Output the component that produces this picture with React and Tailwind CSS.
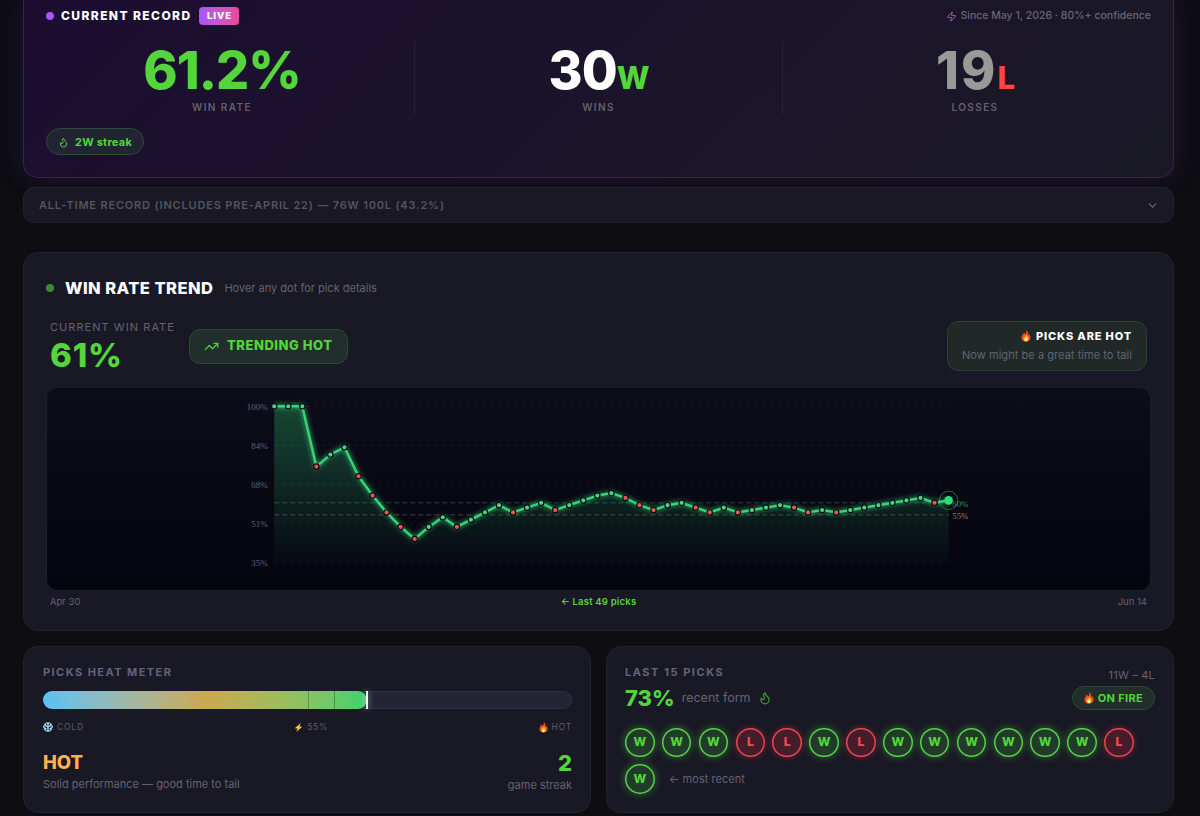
import { ChevronDown, Flame, TrendingUp, Zap } from "lucide-react"

const RESULTS = "WWWLWWLLLLLWWLWWWLWWLWWWWLLLWWLLWLWWWLLWLWWWWWWLW"
const LAST_15 = "WWWLLWLWWWWWWLW"

const CHART = { left: 227.2, right: 901.6, top: 18.3, bottom: 175.1, max: 100, min: 35 }
const GRID = [100, 83.75, 67.5, 51.25, 35]

const yFor = (pct) =>
    CHART.top + ((CHART.max - pct) / (CHART.max - CHART.min)) * (CHART.bottom - CHART.top)

const points = RESULTS.split("").map((result, i) => {
    const wins = RESULTS.slice(0, i + 1).split("W").length - 1
    return {
        result,
        x: CHART.left + (i * (CHART.right - CHART.left)) / (RESULTS.length - 1),
        y: yFor(Math.round((wins / (i + 1)) * 100)),
    }
})

function FireEmoji({ className }) {
    return (
        <svg viewBox="2 0 20 24" className={className}>
            <path
                d="M12.5 0c1 4-1 6-1.200 9-1.300-.8-1.800-2-1.600-3.600C6 8 3 11.500 3 15.500 3 20 6.800 23.500 12 23.500s9-3.500 9-8c0-3-1.200-5.500-2.800-7.300 0 1.600-.5 2.600-1.400 3.200C17 7 15.500 3 12.500 0Z"
                fill="#f4511e"
            />
            <path d="M4.500 4c1 1.500 1.200 2.600.6 4-1-1-1.400-2.400-.6-4Z" fill="#f4511e" />
            <path
                d="M12.500 8.500c.3 2.500 4.500 4.500 4.500 8.500 0 3.500-2.200 5.500-5 5.500s-5-2-5-5c0-2.200 1-3.700 2-4.700 0 1.200.5 2 1.300 2.400.2-2.700.8-4.700 2.200-6.700Z"
                fill="#ffb300"
            />
            <path
                d="M12.300 13.500c.3 1.600 2.700 2.800 2.700 5.200 0 2.200-1.300 3.500-3 3.500s-3-1.200-3-3c0-1.500.7-2.300 1.400-3 .2.700.5 1 .9 1.200 0-1.500.300-2.700 1-3.900Z"
                fill="#fff3c4"
            />
        </svg>
    )
}

function SnowEmoji({ className }) {
    return (
        <svg viewBox="0 0 24 24" className={className}>
            <g stroke="#a5dcf3" strokeWidth="2.800" strokeLinecap="round" fill="none">
                <path d="M12 1.500v21M3 6.800l18 10.400M3 17.200 21 6.800" />
                <path d="m8.500 2 3.500 3 3.500-3M8.500 22l3.500-3 3.500 3M1.500 11l4.500-2-.5-5M22.500 13 18 15l.5 5M5.500 20l.5-5-4.500-2M18.500 4 18 9l4.500 2" />
            </g>
        </svg>
    )
}

function BoltEmoji({ className }) {
    return (
        <svg viewBox="0 0 24 24" className={className}>
            <path d="M18 0 2 14l7.500.8L6 24 22 10l-7.500-.8L18 0Z" fill="#ffc830" />
        </svg>
    )
}

function Stat({ value, suffix, suffixClass, valueClass, label, className }) {
    return (
        <div className={`pt-[3px] text-center ${className}`}>
            <div className={`h-[52px] text-[52px] leading-[53px] font-extrabold ${valueClass}`}>
                {value}
                {suffix && (
                    <span className={`text-[31px] leading-none tracking-[-1px] ${suffixClass}`}>{suffix}</span>
                )}
            </div>
            <div className="mt-[3px] text-[10px] leading-4 font-semibold tracking-[1.400px] text-[#65616c]">
                {label}
            </div>
        </div>
    )
}

function CurrentRecord() {
    return (
        <section className="h-[178px] rounded-b-[15px] border border-t-0 border-[#3a2058] bg-linear-135 from-[#1c0d31] to-[#1a1925] px-[22px] shadow-[0_0_30px_rgba(168,85,247,0.12)]">
            <div className="flex h-8 items-center justify-between">
                <div className="flex items-center">
                    <span className="size-2 rounded-full bg-[#a855f7]" />
                    <h2 className="ml-[7px] text-[12px] font-extrabold tracking-[1.400px] text-white">
                        CURRENT RECORD
                    </h2>
                    <span className="ml-[8px] flex h-[18px] w-10 items-center justify-center rounded bg-linear-to-r from-[#a855f7] to-[#ec4899] text-[9.500px] font-extrabold tracking-[1px] text-white">
                        LIVE
                    </span>
                </div>
                <div className="flex items-center gap-[3px] text-[10.5px] font-medium text-[#6a6671]">
                    <Zap className="size-[11px] text-[#a855f7]" />
                    Since May 1, 2026 · 80%+ confidence
                </div>
            </div>
            <div className="mt-[9px] grid h-[73px] grid-cols-[368px_368px_1fr]">
                <Stat
                    value="61.2%"
                    valueClass="tracking-[-1px] text-[#53d53b]"
                    label="WIN RATE"
                    className="pr-4"
                />
                <Stat
                    value="30"
                    valueClass="tracking-[-1px] text-white"
                    suffix="W"
                    suffixClass="text-[#53d53b]"
                    label="WINS"
                    className="border-l border-white/6 px-4"
                />
                <Stat
                    value="19"
                    valueClass="tracking-[2px] text-[#999999]"
                    suffix="L"
                    suffixClass="text-[#ff4545]"
                    label="LOSSES"
                    className="border-l border-white/6 pl-4"
                />
            </div>
            <div className="mt-[14px] inline-flex h-[27px] items-center gap-[6px] rounded-full border border-[#2c4a36] bg-[#222434] px-[11px] pt-px text-[11px] font-bold tracking-[0.25px] text-[#53d53b]">
                <Flame className="size-[11px]" />
                2W streak
            </div>
        </section>
    )
}

function TrendChart() {
    const line = points.map((p) => `${p.x},${p.y}`).join(" ")
    const last = points[points.length - 1]
    return (
        <svg viewBox="0 0 1103 202" className="block h-[202px] w-full">
            <defs>
                <linearGradient id="area" x1="0" y1="0" x2="0" y2="1">
                    <stop offset="0" stopColor="#2ecc71" stopOpacity="0.3" />
                    <stop offset="1" stopColor="#2ecc71" stopOpacity="0.02" />
                </linearGradient>
                <filter id="glow" x="-5%" y="-20%" width="110%" height="140%">
                    <feGaussianBlur stdDeviation="2.500" />
                </filter>
            </defs>
            {GRID.map((pct) => (
                <g key={pct}>
                    <line
                        x1={CHART.left}
                        x2={CHART.right}
                        y1={yFor(pct)}
                        y2={yFor(pct)}
                        stroke="#ffffff"
                        strokeOpacity="0.08"
                        strokeWidth="0.8"
                        strokeDasharray="4 4"
                    />
                    <text
                        x={CHART.left - 6.5}
                        y={yFor(pct) + 3.3}
                        textAnchor="end"
                        className="fill-[#62626e] font-['Liberation_Serif',serif] text-[9px]"
                    >
                        {Math.round(pct)}%
                    </text>
                </g>
            ))}
            <polygon
                points={`${CHART.left},${CHART.bottom} ${line} ${CHART.right},${CHART.bottom}`}
                fill="url(#area)"
            />
            <line x1={CHART.left} x2={CHART.right} y1={yFor(60)} y2={yFor(60)} stroke="#2ecc71" strokeOpacity="0.35" strokeDasharray="5 3" />
            <line x1={CHART.left} x2={CHART.right} y1={yFor(55)} y2={yFor(55)} stroke="#c9a85a" strokeOpacity="0.35" strokeDasharray="5 3" />
            <text x={last.x + 3.7} y={yFor(60) + 4} className="fill-[#3a8f5f] font-['Liberation_Serif',serif] text-[8.700px]">
                60%
            </text>
            <text x={last.x + 3.7} y={yFor(55) + 4} className="fill-[#a07c48] font-['Liberation_Serif',serif] text-[8.700px]">
                55%
            </text>
            <polyline points={line} fill="none" stroke="#2ecc71" strokeOpacity="0.8" strokeWidth="3.400" filter="url(#glow)" />
            <polyline points={line} fill="none" stroke="#38d479" strokeWidth="2.400" strokeLinejoin="round" />
            {points.slice(0, -1).map((p, i) => (
                <circle
                    key={i}
                    cx={p.x}
                    cy={p.y}
                    r="2.700"
                    fill={p.result === "W" ? "#4cd084" : "#e85555"}
                    stroke="#0a0a14"
                    strokeWidth="1.200"
                />
            ))}
            <circle cx={last.x} cy={last.y} r="9.200" fill="none" stroke="#2ecc71" strokeOpacity="0.5" />
            <circle cx={last.x} cy={last.y} r="4.300" fill="#2edc76" />
        </svg>
    )
}

function WinRateTrend() {
    return (
        <section className="mt-[29px] h-[379px] rounded-[15px] border border-[#23222e] bg-[#191825] px-[22px]">
            <div className="mt-[23px] flex h-6 items-center">
                <span className="size-2 rounded-full bg-[#3a8a33]" />
                <h2 className="ml-[11px] text-[16.5px] font-extrabold tracking-[0.45px] text-white">
                    WIN RATE TREND
                </h2>
                <span className="ml-[11px] text-[11px] text-[#656371]">Hover any dot for pick details</span>
            </div>
            <div className="mt-[21px] flex h-[50px] items-center px-[4px]">
                <div className="pt-[2px]">
                    <div className="text-[11px] leading-3 tracking-[1.050px] text-[#656371]">CURRENT WIN RATE</div>
                    <div className="mt-[4px] text-[33px] leading-[36px] font-extrabold tracking-[0.8px] text-[#53d53b]">
                        61%
                    </div>
                </div>
                <div className="ml-[14px] flex h-[35px] items-center gap-2 rounded-[11px] border border-[#2c4a31] bg-[#222e2b] px-[14px] text-[13px] font-extrabold tracking-[0.55px] text-[#53d53b]">
                    <TrendingUp className="size-[15px]" />
                    TRENDING HOT
                </div>
                <div className="ml-auto h-[50px] rounded-[11px] border border-[#29402f] bg-[#202828] px-[14px] pt-[6px] text-right">
                    <div className="flex items-center justify-end gap-[5px] text-[11px] leading-4 font-extrabold tracking-[0.85px] text-white">
                        <FireEmoji className="h-3 w-[10px]" />
                        PICKS ARE HOT
                    </div>
                    <div className="mt-[3px] text-[11px] leading-4 tracking-[0.05px] text-[#626572]">
                        Now might be a great time to tail
                    </div>
                </div>
            </div>
            <div className="mt-[16px] overflow-hidden rounded-[11px] border border-[#1e1d2a] bg-linear-to-b from-[#0d0d1a] to-[#05050e]">
                <TrendChart />
            </div>
            <div className="mt-[3px] grid grid-cols-3 px-[4px] text-[9.5px] leading-4 text-[#656371]">
                <span>Apr 30</span>
                <span className="text-center font-semibold tracking-[0.2px] text-[#53d53b]">← Last 49 picks</span>
                <span className="text-right">Jun 14</span>
            </div>
        </section>
    )
}

function HeatMeter() {
    return (
        <section className="h-[167px] rounded-[15px] border border-[#23222e] bg-[#191825] pr-[18px] pl-[19px]">
            <h3 className="mt-[17px] text-[11px] leading-4 font-bold tracking-[1.450px] text-[#65637c]">
                PICKS HEAT METER
            </h3>
            <div className="relative mt-[11px] h-[18px] rounded-full bg-[#252434] shadow-[inset_0_0_0_1px_#2f2e40]">
                <div className="h-full w-[61.2%] rounded-full bg-linear-to-r from-[#56c1f5] via-[#cda84e] to-[#34d26f]" />
                <span className="absolute inset-y-0 left-1/2 w-px bg-black/25" />
                <span className="absolute inset-y-0 left-[55%] w-px bg-black/30" />
                <span className="absolute inset-y-0 left-[61%] w-[2.5px] bg-white shadow-[0_0_6px_rgba(255,255,255,0.6)]" />
            </div>
            <div className="mt-[12px] flex items-center justify-between text-[8.5px] leading-3 tracking-[0.8px] text-[#5f5d6b]">
                <span className="flex items-center gap-1">
                    <SnowEmoji className="size-[10px]" />
                    COLD
                </span>
                <span className="flex items-center gap-1">
                    <BoltEmoji className="size-[9px]" />
                    55%
                </span>
                <span className="flex items-center gap-1">
                    <FireEmoji className="h-[11px] w-[9px]" />
                    HOT
                </span>
            </div>
            <div className="mt-[17px] flex items-start justify-between">
                <div>
                    <div className="text-[18.5px] leading-6 font-extrabold text-[#ffb14c]">HOT</div>
                    <div className="mt-[2px] text-[11px] leading-4 text-[#656371]">
                        Solid performance — good time to tail
                    </div>
                </div>
                <div className="text-right">
                    <div className="text-[22px] leading-[26px] font-extrabold text-[#53d53b]">2</div>
                    <div className="mt-px text-[11px] leading-4 text-[#656371]">game streak</div>
                </div>
            </div>
        </section>
    )
}

function PickBadge({ result }) {
    const tone =
        result === "W"
            ? "bg-[#213a2a] text-[#53d53b] shadow-[inset_0_0_0_1.5px_#55d04a,0_0_8px_rgba(83,213,59,0.45)]"
            : "bg-[#451d2a] text-[#ff4a50] shadow-[inset_0_0_0_1.5px_#ea4450,0_0_7px_rgba(255,69,69,0.35)]"
    return (
        <span
            className={`flex size-[29.5px] items-center justify-center rounded-full text-[12px] font-extrabold ${tone}`}
        >
            {result}
        </span>
    )
}

function LastPicks() {
    return (
        <section className="h-[167px] rounded-[15px] border border-[#23222e] bg-[#191825] px-[18px]">
            <div className="flex h-[65px] justify-between pt-[17px]">
                <div>
                    <h3 className="text-[11px] leading-4 font-bold tracking-[1.550px] text-[#65637c]">
                        LAST 15 PICKS
                    </h3>
                    <div className="mt-[6px] flex items-center leading-6 text-[#656371]">
                        <span className="text-[22px] font-extrabold text-[#53d53b]">73%</span>
                        <span className="ml-[7px] text-[12.5px]">recent form</span>
                        <Flame className="ml-[8px] size-[14px] text-[#3f9f3a]" />
                    </div>
                </div>
                <div className="flex flex-col items-end pt-[3px]">
                    <span className="text-[11px] leading-4 tracking-[0.2px] text-[#656371]">11W – 4L</span>
                    <span className="mt-[3px] flex h-6 items-center gap-[4px] rounded-full border border-[#2c4a31] bg-[#222e2b] px-[11px] text-[11px] font-bold tracking-[0.35px] text-[#53d53b]">
                        <FireEmoji className="h-3 w-[10px]" />
                        ON FIRE
                    </span>
                </div>
            </div>
            <div className="mt-[15.5px] flex flex-wrap gap-[7.370px]">
                {LAST_15.split("").map((result, i) => (
                    <PickBadge key={i} result={result} />
                ))}
                <span className="ml-[7px] self-center text-[11px] tracking-[0.05px] text-[#656371]">
                    ← most recent
                </span>
            </div>
        </section>
    )
}

export default function App() {
    return (
        <main className="h-[816px] overflow-hidden bg-[#0d0d12] pr-[26px] pl-[23px] font-['Inter',sans-serif]">
            <CurrentRecord />
            <div className="mt-[9px] flex h-9 items-center justify-between rounded-[11px] border border-[#22212d] bg-[#191824] pr-[14px] pl-[15px] text-[11px] font-semibold tracking-[0.82px] text-[#55545c]">
                ALL-TIME RECORD (INCLUDES PRE-APRIL 22) — 76W 100L (43.2%)
                <ChevronDown className="size-[13px] text-[#6a6973]" />
            </div>
            <WinRateTrend />
            <div className="mt-[15px] grid grid-cols-2 gap-[15px]">
                <HeatMeter />
                <LastPicks />
            </div>
        </main>
    )
}
